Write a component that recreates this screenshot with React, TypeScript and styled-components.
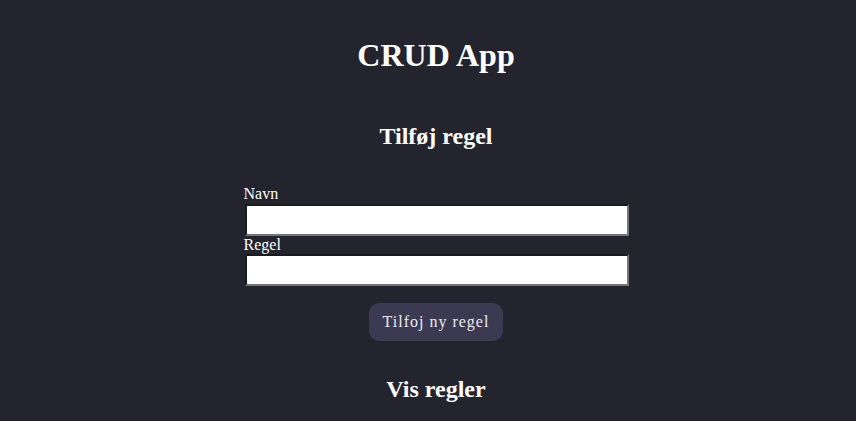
import styled, { createGlobalStyle } from "styled-components";

const GlobalStyles = createGlobalStyle`
  body {
    margin: 8px;
    background-color: #24242f;
    color: #ffffff;
    font-family: "Liberation Serif", "Times New Roman", serif;
  }
`;

const Page = styled.div`
  width: 100vw;
  display: flex;
  flex-direction: column;
  align-items: center;
`;

const Title = styled.h1`
  margin: 29px 0 0;
  font-size: 32px;
  line-height: 37px;
  font-weight: bold;
`;

const SectionTitle = styled.h2<{ $gap: number }>`
  margin: ${(p) => p.$gap}px 0 0;
  font-size: 24px;
  line-height: 28px;
  font-weight: bold;
`;

const Form = styled.form`
  margin-top: 35px;
  width: 385px;
  display: flex;
  flex-direction: column;
`;

const Label = styled.label`
  display: block;
  font-size: 16px;
  line-height: 18.5px;
`;

const Input = styled.input`
  display: block;
  box-sizing: border-box;
  width: 384px;
  height: 32px;
  margin: 0 0 0 1px;
  padding: 4px 6px;
  background: #ffffff;
  border: 2px solid;
  border-color: #1a1a1f #767676 #767676 #1a1a1f;
  font-family: "Liberation Serif", serif;
  font-size: 16px;
`;

const Button = styled.button`
  align-self: center;
  margin-top: 17px;
  height: 38px;
  padding: 0 14px;
  border: none;
  border-radius: 10px;
  background-color: #3c3a52;
  color: #ececf0;
  font-family: "Liberation Serif", serif;
  font-size: 16px;
  letter-spacing: 1px;
  cursor: pointer;
`;

function App() {
  return (
    <Page>
      <GlobalStyles />
      <Title>CRUD App</Title>
      <SectionTitle $gap={48}>Tilføj regel</SectionTitle>
      <Form onSubmit={(e) => e.preventDefault()}>
        <Label htmlFor="navn">Navn</Label>
        <Input id="navn" type="text" />
        <Label htmlFor="regel">Regel</Label>
        <Input id="regel" type="text" />
        <Button type="submit">Tilfoj ny regel</Button>
      </Form>
      <SectionTitle $gap={34}>Vis regler</SectionTitle>
    </Page>
  );
}

export default App;
